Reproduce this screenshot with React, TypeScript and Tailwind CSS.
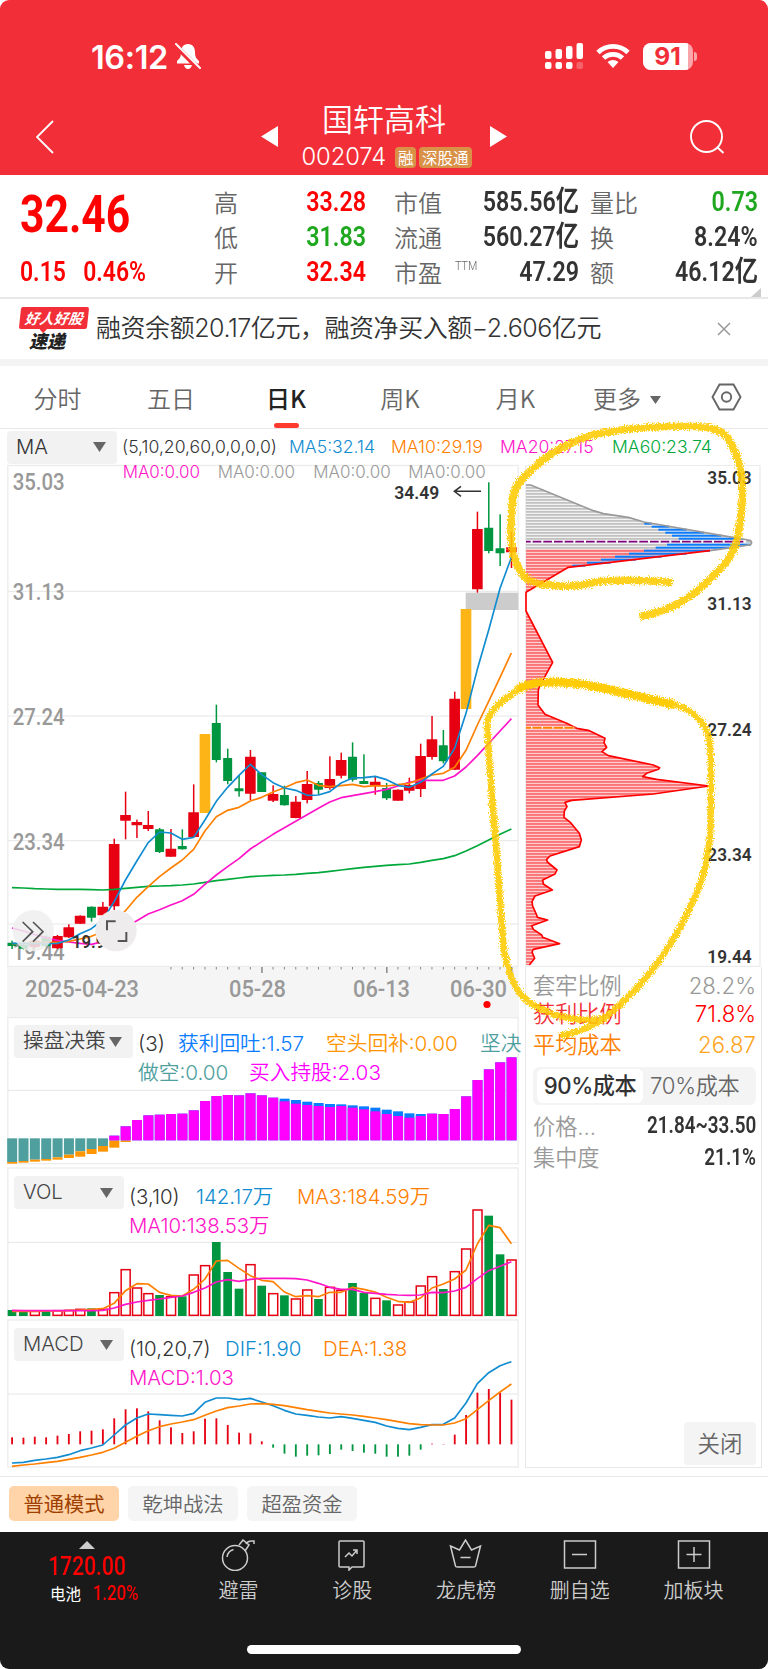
import type { ReactNode } from "react";

const SANS = "font-['Inter','Noto_Sans_CJK_SC',sans-serif]";
const CJK = "font-['Noto_Sans_CJK_SC',sans-serif]";
const DIN = "font-['Roboto','Noto_Sans_CJK_SC',sans-serif]";

// chart units: one third of a pixel
const STEP = 34.05;
const cx = (i: number) => 36 + STEP * i;
const line = (ys: number[]) => ys.map((y, i) => `${cx(i).toFixed(1)},${y}`).join(" ");

type Candle = [color: "r" | "g" | "y", high: number, top: number, bottom: number, low: number];

const candles: Candle[] = [
  ["g", 1442, 1448, 1458, 1467], ["g", 1450, 1455, 1466, 1468], ["r", 1438, 1442, 1460, 1464],
  ["g", 1426, 1430, 1458, 1460], ["r", 1425, 1428, 1465, 1467], ["r", 1393, 1402, 1432, 1434],
  ["r", 1366, 1367, 1391, 1392], ["g", 1339, 1340, 1373, 1385], ["r", 1326, 1340, 1366, 1367],
  ["r", 1136, 1152, 1339, 1350], ["r", 995, 1065, 1082, 1138], ["r", 1079, 1086, 1096, 1134],
  ["r", 1053, 1095, 1107, 1113], ["g", 1104, 1108, 1176, 1179], ["r", 1107, 1166, 1190, 1190],
  ["g", 1108, 1158, 1168, 1169], ["r", 973, 1057, 1131, 1133], ["y", 822, 822, 1059, 1059],
  ["g", 734, 789, 900, 907], ["g", 866, 894, 963, 973], ["g", 945, 985, 994, 1010],
  ["r", 870, 890, 1001, 1021], ["g", 937, 937, 996, 996], ["r", 976, 1002, 1022, 1026],
  ["g", 977, 1005, 1036, 1037], ["r", 1008, 1025, 1074, 1075], ["r", 933, 972, 1020, 1030],
  ["g", 963, 969, 989, 1004], ["r", 889, 957, 984, 989], ["r", 878, 900, 947, 955],
  ["g", 847, 890, 959, 965], ["g", 883, 963, 972, 972], ["r", 950, 965, 976, 1004],
  ["g", 969, 984, 1015, 1020], ["r", 988, 989, 1022, 1022], ["r", 953, 975, 992, 1000],
  ["r", 851, 888, 987, 1011], ["r", 768, 838, 891, 899], ["g", 810, 856, 904, 910],
  ["r", 695, 716, 929, 930], ["y", 447, 447, 747, 747], ["r", 155, 207, 388, 398],
  ["g", 67, 203, 273, 280], ["g", 163, 265, 280, 318], ["r", 215, 262, 277, 324],
];

const ma5 = [1450, 1451, 1451, 1451, 1450, 1440, 1421, 1406, 1380, 1325, 1260, 1203, 1148, 1116, 1119, 1138, 1132, 1080, 1024, 982, 946, 913, 944, 968, 984, 991, 1006, 1005, 995, 969, 954, 953, 949, 959, 976, 982, 967, 942, 919, 865, 760, 628, 510, 385, 292];
const ma10 = [1451, 1450, 1448, 1447, 1447, 1444, 1437, 1429, 1415, 1385, 1352, 1312, 1280, 1250, 1224, 1200, 1168, 1113, 1070, 1051, 1042, 1023, 1012, 996, 983, 968, 960, 976, 980, 977, 973, 980, 977, 978, 974, 970, 957, 945, 940, 922, 871, 795, 724, 652, 579];
const ma20 = [1404, 1413, 1424, 1433, 1441, 1446, 1450, 1453, 1445, 1425, 1400, 1382, 1362, 1349, 1335, 1322, 1303, 1273, 1245, 1220, 1196, 1167, 1145, 1123, 1103, 1084, 1064, 1045, 1026, 1013, 1007, 1001, 995, 988, 978, 967, 961, 961, 961, 948, 921, 887, 850, 813, 776];
const ma60 = [1283, 1284, 1286, 1287, 1288, 1288, 1288, 1289, 1290, 1288, 1285, 1282, 1279, 1278, 1277, 1275, 1272, 1267, 1262, 1258, 1254, 1250, 1248, 1246, 1245, 1243, 1240, 1238, 1234, 1230, 1226, 1222, 1219, 1216, 1214, 1212, 1207, 1201, 1196, 1187, 1173, 1157, 1140, 1123, 1107];

const COLORS = { r: "#e60012", g: "#009640", y: "#fdb417" };

function CandleChart() {
  return (
    <svg className={`${DIN} overflow-visible`} width="512" height="502" viewBox="21 15 1536 1506">
      <rect x="23.5" y="16.5" width="1531" height="1503" fill="none" stroke="#ececec" strokeWidth="4" />
      {[394, 768, 1142, 1392].map((y) => (
        <line key={y} x1="23" x2="1555" y1={y} y2={y} stroke="#e6e6e6" strokeWidth="3" />
      ))}
      {([["35.03", 90], ["31.13", 420], ["27.24", 795], ["23.34", 1169], ["19.44", 1501]] as const).map(([t, y]) => (
        <text key={t} x="38" y={y} fontSize="72" fill="#999" fontWeight="500" textLength="156" lengthAdjust="spacingAndGlyphs">{t}</text>
      ))}
      <g className={SANS} fontSize="51">
        {[368, 653, 940, 1225].map((x, i) => (
          <text key={x} x={x} y="54" fill={i === 0 ? "#ff14c8" : "#999"} textLength="232" lengthAdjust="spacingAndGlyphs" fontWeight="350">MA0:0.00</text>
        ))}
      </g>
      <rect x="1397" y="398" width="158" height="52" fill="#ccc" />
      {candles.map(([c, high, top, bottom, low], i) => {
        const w = c === "g" ? 27 : 32;
        return (
          <g key={i} fill={COLORS[c]}>
            <rect x={cx(i) - 2} y={high} width="4.5" height={low - high} />
            <rect x={cx(i) - w / 2} y={top} width={w} height={bottom - top} rx="1" />
          </g>
        );
      })}
      <g fill="none" strokeWidth="5" strokeLinejoin="round">
        <polyline points={line(ma60)} stroke="#00a83c" />
        <polyline points={line(ma20)} stroke="#ff14c8" />
        <polyline points={line(ma10)} stroke="#ff8000" />
        <polyline points={line(ma5)} stroke="#108cd0" />
      </g>
      <text x="1183" y="117" fontSize="56" fill="#333" fontWeight="600" textLength="135" lengthAdjust="spacingAndGlyphs">34.49</text>
      <path d="M1443 94h-80m20-15-20 15 20 15" fill="none" stroke="#333" strokeWidth="4.5" />
      <text x="216" y="1463" fontSize="56" fill="#333" fontWeight="600" textLength="100" lengthAdjust="spacingAndGlyphs">19.9</text>
      <circle cx="100" cy="1412" r="62" fill="#eeeeee" fillOpacity=".85" />
      <circle cx="348" cy="1412" r="62" fill="#efecee" />
      <path d="M68 1386l30 29-30 30M99 1386l30 29-30 30" fill="none" stroke="#555" strokeWidth="5" />
      <path d="M321 1411v-27h26M379 1416v27h-26" fill="none" stroke="#555" strokeWidth="6" />
    </svg>
  );
}

function DateAxis() {
  return (
    <svg className={`${DIN} bg-[#f5f5f5]`} width="512" height="50" viewBox="7 967 512 50">
      {Array.from({ length: 31 }, (_, k) => k + 14).map((i) => {
        const major = i === 22 || i === 33 || i === 44;
        return <rect key={i} x={cx(i) / 3 - 0.5} y="967" width={major ? 1.5 : 1} height={major ? 6 : 2.5} fill="#888" />;
      })}
      <g fontSize="24" fill="#999" fontWeight="500">
        <text x="25" y="997" textLength="114" lengthAdjust="spacingAndGlyphs">2025-04-23</text>
        <text x="229" y="997" textLength="57" lengthAdjust="spacingAndGlyphs">05-28</text>
        <text x="353" y="997" textLength="57" lengthAdjust="spacingAndGlyphs">06-13</text>
        <text x="450" y="997" textLength="57" lengthAdjust="spacingAndGlyphs">06-30</text>
      </g>
      <circle cx="487" cy="1004.5" r="3.6" fill="#f00" />
    </svg>
  );
}

// [top of blue, top of magenta] for the bars from index 9 onwards
const holdBars: [number, number][] = [
  [527, 527], [499, 499], [480, 480], [466, 466], [464, 464], [462, 462], [461, 461], [451, 451], [423, 423],
  [408, 408], [405, 405], [406, 406], [400, 400], [406, 406], [413, 413], [416, 424], [420, 431], [425, 435],
  [429, 438], [432, 441], [433, 438], [436, 443], [439, 448], [443, 454], [449, 462], [454, 468], [460, 473],
  [462, 468], [461, 461], [462, 462], [447, 447], [409, 409], [360, 360], [328, 328], [307, 307], [292, 292],
];
const shortBars: [number, number][] = [
  [606, 611], [603, 608], [599, 605], [597, 602], [592, 599], [584, 594], [574, 590], [567, 582], [558, 575],
];

function DecisionChart() {
  return (
    <svg className="absolute left-0 top-0" width="512" height="148" viewBox="21 171 1536 444">
      <rect x="23.5" y="173" width="1531" height="438" fill="none" stroke="#ececec" strokeWidth="4" />
      <line x1="23" x2="1555" y1="391" y2="391" stroke="#e6e6e6" strokeWidth="3" />
      {shortBars.map(([a, b], i) => (
        <g key={i}>
          <rect x={cx(i) - 14.5} y="535" width="30" height={a - 535} fill="#4f9f9f" />
          <rect x={cx(i) - 14.5} y={a} width="30" height={b - a} fill="#ff9500" />
        </g>
      ))}
      <rect x={cx(9) - 14.5} y="541" width="30" height="22" fill="#ff9500" />
      <rect x={cx(10) - 14.5} y="541" width="30" height="5" fill="#ff9500" />
      {holdBars.map(([b, m], k) => (
        <g key={k}>
          <rect x={cx(k + 9) - 14.5} y={b} width="30" height={541 - b} fill="#0a7cff" />
          <rect x={cx(k + 9) - 14.5} y={m} width="30" height={541 - m} fill="#f0f" />
        </g>
      ))}
    </svg>
  );
}

const volume = [420, 422, 423, 421, 421, 420, 417, 415, 417, 367, 298, 353, 370, 375, 379, 379, 314, 286, 216, 306, 356, 283, 347, 370, 376, 386, 359, 387, 351, 360, 339, 369, 384, 391, 404, 395, 347, 319, 357, 304, 236, 119, 137, 253, 269];
const volumeDown = new Set([0, 1, 3, 7, 13, 15, 18, 19, 20, 22, 24, 27, 30, 31, 33, 38, 42, 43]);
const volMa3 = [424, 424, 424, 423, 423, 422, 420, 418, 416, 400, 362, 341, 342, 367, 376, 378, 358, 327, 273, 271, 295, 317, 331, 335, 366, 380, 377, 380, 367, 367, 352, 358, 366, 382, 394, 397, 384, 354, 342, 327, 300, 222, 166, 173, 221];
const volMa10 = [421, 422, 422, 422, 422, 422, 422, 422, 421, 414, 403, 396, 391, 387, 382, 378, 367, 354, 336, 329, 334, 328, 325, 325, 325, 326, 330, 340, 352, 358, 358, 367, 370, 373, 375, 376, 375, 367, 368, 363, 352, 326, 302, 289, 275];

function VolumeChart() {
  return (
    <svg className="absolute left-0 top-0" width="512" height="150" viewBox="21 -9 1536 450">
      <rect x="23.5" y="-6" width="1531" height="444" fill="none" stroke="#ececec" strokeWidth="4" />
      <line x1="23" x2="1555" y1="217" y2="217" stroke="#e6e6e6" strokeWidth="3" />
      {volume.map((y, i) =>
        volumeDown.has(i) ? (
          <rect key={i} x={cx(i) - 13} y={y} width="26" height={438 - y} fill="#009640" />
        ) : (
          <rect key={i} x={cx(i) - 13} y={y + 1} width="27" height={435 - y} fill="none" stroke="#e60012" strokeWidth="4.5" />
        ),
      )}
      <g fill="none" strokeWidth="5" strokeLinejoin="round">
        <polyline points={line(volMa3)} stroke="#ff8000" />
        <polyline points={line(volMa10)} stroke="#ff14c8" />
      </g>
    </svg>
  );
}

const macdBars = [803, 804, 801, 803, 798, 793, 785, 783, 779, 746, 719, 716, 725, 752, 773, 790, 785, 747, 746, 766, 789, 791, 815, 834, 852, 861, 858, 857, 853, 840, 844, 849, 852, 861, 861, 858, 840, 822, 823, 795, 736, 669, 658, 669, 690];
const dif = [880, 878, 872, 868, 863, 855, 843, 835, 826, 796, 766, 745, 733, 735, 737, 739, 731, 698, 685, 685, 690, 686, 697, 708, 722, 733, 737, 742, 745, 741, 746, 752, 758, 769, 776, 780, 773, 765, 764, 745, 700, 642, 609, 588, 576];
const dea = [890, 886, 883, 879, 875, 869, 863, 856, 848, 836, 818, 800, 783, 771, 763, 757, 750, 737, 724, 714, 709, 703, 702, 704, 708, 714, 720, 725, 730, 733, 736, 740, 745, 750, 756, 762, 765, 766, 766, 760, 747, 720, 693, 667, 643];

function MacdChart() {
  return (
    <svg className="absolute left-0 top-0" width="512" height="149" viewBox="21 448 1536 447">
      <rect x="23.5" y="451" width="1531" height="441" fill="none" stroke="#ececec" strokeWidth="4" />
      <line x1="23" x2="1555" y1="673" y2="673" stroke="#e6e6e6" strokeWidth="3" />
      {macdBars.map((y, i) => (
        <rect key={i} x={cx(i) - 2.5} y={Math.min(y, 824)} width="5.5" height={Math.abs(y - 824)} fill={y > 824 ? "#009640" : "#e60012"} />
      ))}
      <g fill="none" strokeWidth="5" strokeLinejoin="round">
        <polyline points={line(dif)} stroke="#108cd0" />
        <polyline points={line(dea)} stroke="#ff8000" />
      </g>
    </svg>
  );
}

const trappedEdge = "62,195 250,272 280,281 355,292 402,306 690,356 722,362 725,368 722,374 690,379 600,392";
const profitEdge =
  "600,392 175,442 48,517 48,573 128,727 88,800 85,810 84,855 105,883 170,910 200,925 235,931 285,955 282,968 290,982 276,995 295,1007 430,1035 449,1043 445,1048 410,1060 398,1070 440,1078 597,1098 430,1122 185,1141 165,1147 171,1160 163,1173 162,1192 182,1208 208,1240 214,1260 208,1280 120,1308 110,1318 112,1326 141,1350 135,1362 98,1380 100,1392 127,1410 75,1428 66,1445 68,1458 80,1485 82,1492 113,1500 65,1517 70,1528 95,1545 98,1552 149,1571 70,1588 66,1596 74,1615 58,1635";
// [y, x where the blue part begins, x where it ends]
const recentRows = [
  [310, 403, 425], [319, 425, 478], [328, 445, 530], [337, 466, 582], [346, 486, 634], [355, 506, 685], [373, 471, 722],
  [382, 437, 670], [391, 402, 600], [400, 357, 530], [409, 315, 455], [418, 273, 378], [427, 231, 302], [436, 187, 226],
];

function ChipChart() {
  return (
    <svg className={DIN} width="237" height="502" viewBox="45 135 711 1506">
      <defs>
        <pattern id="trapped" width="9" height="9" y="193" patternUnits="userSpaceOnUse">
          <rect width="9" height="6.5" fill="#e2e2e2" />
          <rect width="9" height="3" fill="#a4a4a4" />
        </pattern>
        <pattern id="profit" width="9" height="9" y="193" patternUnits="userSpaceOnUse">
          <rect width="9" height="7" fill="#ffb4b4" />
          <rect width="9" height="3.6" fill="#f63c40" />
        </pattern>
        <clipPath id="profitClip">
          <rect x="47" y="387" width="680" height="1260" />
        </clipPath>
        <clipPath id="trappedClip">
          <rect x="47" y="190" width="680" height="197" />
        </clipPath>
      </defs>
      <path d="M47 1641V136h703v1505M47 1639h703" fill="none" stroke="#ececec" strokeWidth="4" />
      <polygon points={`48,195 ${trappedEdge} ${profitEdge} 48,1635`} fill="url(#trapped)" clipPath="url(#trappedClip)" />
      <polygon points={`48,195 ${trappedEdge} ${profitEdge} 48,1635`} fill="url(#profit)" clipPath="url(#profitClip)" />
      {recentRows.map(([y, a, b]) => (
        <rect key={y} x={a} y={y - 2} width={b - a} height="6" fill="#0a7cff" />
      ))}
      <polyline points={`48,195 ${trappedEdge}`} fill="none" stroke="#999" strokeWidth="5" strokeLinejoin="round" />
      <polyline points={profitEdge} fill="none" stroke="#f00" strokeWidth="5" strokeLinejoin="round" />
      <rect x="48" y="361" width="660" height="7" fill="#fff" />
      <line x1="48" x2="700" y1="365" y2="365" stroke="#800080" strokeWidth="5" strokeDasharray="26 6" strokeDashoffset="12" />
      <rect x="48" y="920" width="145" height="6" fill="#fff" />
      <line x1="48" x2="196" y1="923" y2="923" stroke="#ff8000" strokeWidth="6" strokeDasharray="28 4" strokeDashoffset="13" />
      <g fontSize="56" fill="#333" fontWeight="600">
        {([["35.03", 193], ["31.13", 571], ["27.24", 947], ["23.34", 1324], ["19.44", 1629]] as const).map(([t, y]) => (
          <text key={t} x="592" y={y} textLength="133" lengthAdjust="spacingAndGlyphs">{t}</text>
        ))}
      </g>
    </svg>
  );
}

// crayon circles laid over both charts
function Scribbles() {
  return (
    <svg className="absolute left-0 top-0 pointer-events-none" width="768" height="1669" viewBox="0 0 768 1669">
      <defs>
        <filter id="crayon" x="-5%" y="-5%" width="110%" height="110%">
          <feTurbulence type="fractalNoise" baseFrequency="0.8" numOctaves="3" seed="4" result="n" />
          <feDisplacementMap in="SourceGraphic" in2="n" scale="7" xChannelSelector="R" yChannelSelector="G" />
          <feGaussianBlur stdDeviation="0.4" />
        </filter>
      </defs>
      <g filter="url(#crayon)" transform="translate(-.5 -.5)" fill="none" stroke="#ffcb05" strokeOpacity=".88" strokeLinejoin="round">
        <path
          strokeWidth="7.5"
          d="M673 583C648 581 624 580 606 581.5C590 583 574 589 556 586C542 585 530 585 521 572C511 556 510 538 512.5 510C512 498 515 487 524 478C540 462 560 445 592 436C622 428 680 425 708 428C728 430 734 446 739 462C745 482 743 500 741 520C738 545 734 558 716 574C690 602 668 612 640 617"
        />
        <path
          strokeWidth="6.5"
          d="M607 1019C590 1022 560 1020 546 1011C520 1002 512 985 505 955C500 910 500 880 496 840C492 795 489 760 488 724C488 712 502 702 512 695C528 680 550 682 570 683C612 688 640 697 678 706C700 714 710 728 711 750C712 780 711 800 711 830C709 860 704 880 692 905C676 940 656 970 630 996C612 1014 594 1031 561 1036"
        />
        <path strokeWidth="9" d="M518 690C530 682 550 682 570 683C600 686 640 698 674 705" />
      </g>
    </svg>
  );
}

function Select({ children, width, cjk }: { children: ReactNode; width: string; cjk?: boolean }) {
  return (
    <div className={`${width} shrink-0 h-[33px] rounded bg-[#f2f2f2] text-[#444] flex items-center justify-between pl-[9px] pr-[11px] ${cjk ? "text-[20.7px]" : "text-[20.3px]"}`}>
      <span className="whitespace-nowrap -mt-px">{children}</span>
      <svg className="shrink-0" width="13" height="10" viewBox="0 0 13 10"><path d="M0 0h13L6.5 10z" fill="#666" /></svg>
    </div>
  );
}

function Stat({ label, value, color = "text-[#333]", sup }: { label: string; value: string; color?: string; sup?: string }) {
  return (
    <div className="flex items-center justify-between h-[35px]">
      <span className={`${CJK} -mt-[3px] text-[24px] leading-[35px] font-[350] text-[#666] flex whitespace-nowrap`}>
        {label}
        {sup && <span className="font-['Roboto'] text-[12.5px] leading-[16px] ml-[13px] mt-[4px] scale-x-[.86] origin-left">{sup}</span>}
      </span>
      <span className={`${DIN} ${color} -mt-px text-[28px] font-[600] whitespace-nowrap origin-right scale-x-[.83] -ml-8`}>{value}</span>
    </div>
  );
}

const tabs = ["分时", "五日", "日K", "周K", "月K"];
const tabWidth = ["w-[115px]", "w-[112px]", "w-[118px]", "w-[110px]", "w-[121px]"];

const actions: { label: string; icon: ReactNode }[] = [
  { label: "避雷", icon: <><circle cx="14" cy="19" r="12.5" /><path d="M6 18c.5-4 3-6.500 6.500-7.500M18 6l4-5 6 5-4 6M25 5c2-4 5-3 8-3v3" /></> },
  { label: "诊股", icon: <><path d="M5 2h23q1 0 1 1v24q0 1-1 1H17l-3 3v-3H5q-1 0-1-1V3q0-1 1-1zM10 18l4-4 3 3 5-6M18 11h4v4" /></> },
  { label: "龙虎榜", icon: <><path d="M1.500 7l9 4L16.500 1l6 10 9-4-5 20q0 1-2 1h-16q-2 0-2-1zM11.500 18.500h10" /></> },
  { label: "删自选", icon: <><path d="M1.500 2h31v27h-31zM9 15.500h15" /></> },
  { label: "加板块", icon: <><path d="M1.500 2h31v27h-31zM9.500 15.500h15M17 8v15" /></> },
];

export default function App() {
  return (
    <div className={`${SANS} relative w-[768px] h-[1669px] bg-white overflow-hidden rounded-[9px] text-[#333]`}>
      {/* Header */}
      <header className="h-[175px] bg-[#f22f38] text-white">
        <div className="h-[88px] pt-[40px] pl-[91px] pr-[71px] flex items-start">
          <span className="w-[84px] text-[32.5px] leading-[35px] font-semibold tracking-[-0.4px]">16:12</span>
          <svg width="26" height="27" viewBox="0 0 26 27" className="mt-[3px]">
            <path d="M13 1c5 0 7 4 7 8 0 6 2 7 4 9v2.5H2V18c2-2 4-3 4-9 0-4 2-8 7-8zM9 22h8q-1 4-4 4t-4-4z" fill="#fff" />
            <path d="M0 2l24 24" stroke="#f22f38" strokeWidth="5" />
            <path d="M1 1l24 24" stroke="#fff" strokeWidth="2" strokeLinecap="round" />
          </svg>
          <div className="ml-auto mt-[3px] flex items-start">
            <svg width="39" height="27" viewBox="0 0 39 27" fill="#fff">
              <rect x="0" y="8" width="6.5" height="8" rx="2" /><rect x="10.5" y="6" width="6.5" height="10" rx="2" />
              <rect x="21" y="3" width="6.5" height="13" rx="2" /><rect x="31.5" y="0" width="6.5" height="16" rx="2" />
              <rect x="0" y="19" width="6.5" height="7" rx="2" /><rect x="10.5" y="19" width="6.5" height="7" rx="2" />
              <rect x="21" y="19" width="6.5" height="7" rx="2" /><rect x="31.5" y="19" width="6.5" height="7" rx="2" opacity=".25" />
            </svg>
            <svg width="34" height="26" viewBox="0 0 34 26" className="ml-[12px]">
              <path d="M2 9.5a21.5 21.5 0 0 1 30 0M7.5 15a14 14 0 0 1 19 0" fill="none" stroke="#fff" strokeWidth="4.8" />
              <path d="M17 25l-5.5-6q5.5-4 11 0z" fill="#fff" />
            </svg>
            <div className="ml-[13px] h-[27px] flex items-center">
              <div className="relative w-[50px] h-[27px] rounded-[8px] bg-[#f9a5a9] overflow-hidden">
                <div className="w-[45px] h-full bg-white" />
                <span className="absolute inset-0 text-center text-[24.5px] leading-[27px] font-bold text-[#f22f38]">91</span>
              </div>
              <div className="ml-[1.5px] w-[3px] h-[9px] rounded-r-full bg-[#f9a5a9]" />
            </div>
          </div>
        </div>
        <div className="h-[87px] flex items-start">
          <svg width="18" height="34" viewBox="0 0 18 34" className="ml-[36px] mt-[32px]"><path d="M17 1L1 17l16 16" fill="none" stroke="#fff" strokeWidth="1.8" /></svg>
          <svg width="17" height="21" viewBox="0 0 17 21" className="ml-[207px] mt-[38px]"><path d="M17 0v21L0 10.5z" fill="#fff" /></svg>
          <div className="w-[212px] pt-[11px] flex flex-col items-center">
            <div className={`${CJK} text-[31px] leading-[38px] font-[350]`}>国轩高科</div>
            <div className="mt-[7px] pl-[5px] flex items-center h-[26px]">
              <span className="text-[23.8px] w-[94px] font-[350] tracking-[-0.1px]">002074</span>
              <span className={`${CJK} h-[21px] px-[2.5px] rounded-sm bg-[#d99148] text-[15.5px] leading-[20px]`}>融</span>
              <span className={`${CJK} ml-[3px] h-[21px] px-[3px] rounded-sm bg-[#d99148] text-[15.5px] leading-[20px]`}>深股通</span>
            </div>
          </div>
          <svg width="17" height="21" viewBox="0 0 17 21" className="mt-[38px]"><path d="M0 0v21l17-10.5z" fill="#fff" /></svg>
          <svg width="36" height="36" viewBox="0 0 36 36" className="ml-[183px] mt-[32px]"><circle cx="16.5" cy="16.5" r="15.5" fill="none" stroke="#fff" strokeWidth="1.9" /><path d="M27 27l6.5 6" stroke="#fff" strokeWidth="1.9" /></svg>
        </div>
      </header>

      {/* Quote */}
      <section className="relative h-[124px] flex border-b-2 border-[#e8e8e8] pt-[10px]">
        <div className={`${DIN} w-[214px] pl-[20px] text-[#f00] whitespace-nowrap`}>
          <div className="h-[70px] pt-[2px] text-[52px] leading-[56px] font-bold origin-left scale-x-[.82]">32.46</div>
          <div className="h-[35px] flex items-center text-[28px] leading-[33px] font-[600] origin-left scale-x-[.82] -mt-px">
            <span className="w-[77px]">0.15</span>
            <span>0.46%</span>
          </div>
        </div>
        <div className="w-[152px]">
          <Stat label="高" value="33.28" color="text-[#f00]" />
          <Stat label="低" value="31.83" color="text-[#1fa81f]" />
          <Stat label="开" value="32.34" color="text-[#f00]" />
        </div>
        <div className="ml-[28px] w-[185px]">
          <Stat label="市值" value="585.56亿" />
          <Stat label="流通" value="560.27亿" />
          <Stat label="市盈" value="47.29" sup="TTM" />
        </div>
        <div className="ml-[11px] w-[168px]">
          <Stat label="量比" value="0.73" color="text-[#1fa81f]" />
          <Stat label="换" value="8.24%" />
          <Stat label="额" value="46.12亿" />
        </div>
        <svg className="absolute right-[7px] bottom-0" width="10" height="9" viewBox="0 0 10 9"><path d="M10 0v9H0z" fill="#ccc" /></svg>
      </section>

      {/* News */}
      <section className="h-[60px] flex items-center pl-[20px] pr-[37px]">
        <div className={`${CJK} w-[68px] h-[44px] flex flex-col italic font-bold`}>
          <div className="relative h-[22px] -skew-x-6 rounded-[2px] bg-[#f22f38] text-white text-[14.5px] leading-[22px] text-center">
            好人好股
            <i className="absolute left-[22px] top-[20px] w-[5px] h-[5px] rotate-45 bg-[#f22f38]" />
          </div>
          <div className="pl-[9px] mt-px text-[18px] leading-[21px] font-black text-[#222]">速递</div>
        </div>
        <span className="ml-[8px] text-[25px] font-[350] tracking-[-0.45px] whitespace-nowrap">融资余额20.17亿元，融资净买入额−2.606亿元</span>
        <svg className="ml-auto" width="14" height="14" viewBox="0 0 14 14"><path d="M1 1l12 12M13 1L1 13" stroke="#999" strokeWidth="1.5" /></svg>
      </section>
      <div className="h-[7px] bg-[#f4f4f4]" />

      {/* Period tabs */}
      <nav className={`${CJK} h-[63px] flex border-b border-[#e8e8e8] text-[24px] text-[#666]`}>
        {tabs.map((t, i) => (
          <div key={t} className={`${tabWidth[i]} h-full flex flex-col items-center justify-between pt-[13px] ${t === "日K" ? "font-medium text-[#222]" : "font-[350]"}`}>
            <span className="leading-[38px]">{t}</span>
            {t === "日K" && <i className="w-[25px] h-[5px] rounded-sm bg-[#ff3b30]" />}
          </div>
        ))}
        <div className="h-full pl-[17px] pt-[13px] flex font-[350]">
          <span className="leading-[38px]">更多</span>
          <svg className="ml-[9px] mt-[17px]" width="11" height="8" viewBox="0 0 11 8"><path d="M0 0h11L5.5 8z" fill="#666" /></svg>
        </div>
        <svg className="ml-[50px] mt-[17px]" width="31" height="28" viewBox="0 0 31 28" fill="none" stroke="#666" strokeWidth="1.9">
          <path d="M8.5 1.5h14L29.5 14l-7 12.5h-14L1.5 14z" /><circle cx="15.5" cy="14" r="4.7" />
        </svg>
      </nav>

      {/* Moving averages */}
      <div className="h-[36px] pl-[7px] flex items-center text-[17.6px] font-[350] whitespace-nowrap">
        <div className="w-[110px] h-[33px] mr-[5px] rounded bg-[#f2f2f2] flex items-center justify-between pl-[9px] pr-[11px] text-[20.3px] text-[#333]">
          MA
          <svg width="13" height="10" viewBox="0 0 13 10"><path d="M0 0h13L6.5 10z" fill="#666" /></svg>
        </div>
        <span className="w-[167px]">(5,10,20,60,0,0,0,0)</span>
        <span className="w-[102px] text-[#108cd0]">MA5:32.14</span>
        <span className="w-[109px] text-[#ff8000]">MA10:29.19</span>
        <span className="w-[112px] text-[#ff14c8]">MA20:27.15</span>
        <span className="text-[#00a83c]">MA60:23.74</span>
      </div>

      {/* Charts */}
      <main className="h-[1012px] flex pl-[7px] border-b border-[#e8e8e8]">
        <div className="w-[512px] flex flex-col">
          <CandleChart />
          <DateAxis />
          <div className="relative h-[150px]">
            <DecisionChart />
            <div className="relative flex pt-[8px] pl-[7px] text-[20.7px] font-[350] whitespace-nowrap">
              <Select width="w-[119px]" cjk>操盘决策</Select>
              <div className="pl-[5px] leading-[29px] pt-[4px]">
                <div className="flex">
                  <span className="w-[40px]">(3)</span>
                  <span className="w-[148px] text-[#0a7cff]">获利回吐:1.57</span>
                  <span className="w-[154px] text-[#ff9500]">空头回补:0.00</span>
                  <span className="text-[#4f9f9f]">坚决</span>
                </div>
                <div className="flex">
                  <span className="w-[111px] text-[#4f9f9f]">做空:0.00</span>
                  <span className="text-[#f0f]">买入持股:2.03</span>
                </div>
              </div>
            </div>
          </div>
          <div className="relative h-[152px]">
            <VolumeChart />
            <div className="relative flex pt-[9px] pl-[7px] text-[20.4px] font-[350] whitespace-nowrap">
              <Select width="w-[110px]">VOL</Select>
              <div className="pl-[5px] leading-[29px] pt-[6px]">
                <div className="flex">
                  <span className="w-[67px]">(3,10)</span>
                  <span className="w-[101px] text-[#108cd0]">142.17万</span>
                  <span className="text-[#ff8000]">MA3:184.59万</span>
                </div>
                <div className="text-[#ff14c8]">MA10:138.53万</div>
              </div>
            </div>
          </div>
          <div className="relative h-[149px]">
            <MacdChart />
            <div className="relative flex pt-[9px] pl-[7px] text-[20.4px] font-[350] whitespace-nowrap">
              <Select width="w-[110px]">MACD</Select>
              <div className="pl-[5px] leading-[29px] pt-[6px]">
                <div className="flex">
                  <span className="w-[96px]">(10,20,7)</span>
                  <span className="w-[98px] text-[#108cd0]">DIF:1.90</span>
                  <span className="text-[#ff8000]">DEA:1.38</span>
                </div>
                <div className="text-[#ff14c8]">MACD:1.03</div>
              </div>
            </div>
          </div>
        </div>

        <aside className="ml-[6px] w-[237px] h-[1003px] flex flex-col">
          <ChipChart />
          <div className="flex-1 border-x border-b border-[#e8e8e8] pl-[7px] pr-[5px] pt-[4px] pb-[2px] flex flex-col text-[22.2px] font-[350]">
            <div className="h-[29px] leading-[29px] flex justify-between text-[#999]"><span>套牢比例</span><span>28.2%</span></div>
            <div className="h-[29px] leading-[27px] flex justify-between text-[#f00]"><span className="text-[#f22f38]">获利比例</span><span>71.8%</span></div>
            <div className="h-[31px] leading-[31px] flex justify-between text-[#ffa51e]"><span className="text-[#ff8000]">平均成本</span><span>26.87</span></div>
            <div className="mt-[7px] h-[38px] rounded-md bg-[#f4f4f4] flex items-center pl-[4px] text-[#666]">
              <span className="w-[106px] h-[34px] leading-[34px] rounded-md bg-white text-center font-medium text-[#333] whitespace-nowrap tracking-[-0.4px]">90%成本</span>
              <span className="pl-[7px] whitespace-nowrap tracking-[-0.3px]">70%成本</span>
            </div>
            <div className="mt-[6px] h-[31px] flex items-center justify-between text-[#999]">
              <span>价格…</span>
              <span className={`${DIN} text-[23px] font-[600] text-[#333] origin-right scale-x-[.82]`}>21.84~33.50</span>
            </div>
            <div className="h-[32px] flex items-center justify-between text-[#999]">
              <span>集中度</span>
              <span className={`${DIN} text-[23px] font-[600] text-[#333] origin-right scale-x-[.82]`}>21.1%</span>
            </div>
            <button className="mt-auto self-end w-[72px] h-[43px] rounded bg-[#f4f4f4] text-[#666] text-[22.5px] font-[350]">关闭</button>
          </div>
        </aside>
      </main>

      {/* Modes */}
      <div className={`${CJK} h-[55px] pl-[9px] pt-[9px] flex gap-[9px] text-[20.3px] text-center leading-[34px]`}>
        <span className="w-[110px] h-[35px] rounded-[5px] bg-[#ffd4a8] text-[#a04000]">普通模式</span>
        <span className="w-[110px] h-[35px] rounded-[5px] bg-[#f5f5f5] text-[#666] font-[350]">乾坤战法</span>
        <span className="w-[110px] h-[35px] rounded-[5px] bg-[#f5f5f5] text-[#666] font-[350]">超盈资金</span>
      </div>

      {/* Bottom bar */}
      <footer className="h-[137px] bg-[#1a1a1a] text-[#ccc] flex flex-col">
        <div className="flex">
          <div className={`${DIN} w-[174px] pt-[9px] flex flex-col items-center text-[#f00]`}>
            <svg width="16" height="8" viewBox="0 0 16 8"><path d="M8 0l8 8H0z" fill="#ccc" /></svg>
            <div className="mt-[3px] h-[29px] leading-[29px] text-[25px] font-medium scale-x-[.84]">1720.00</div>
            <div className="h-[25px] leading-[25px] flex pl-[14px]">
              <span className={`${CJK} text-[15.5px] text-white`}>电池</span>
              <span className="ml-[12px] w-[45px] text-[21px] font-medium origin-left scale-x-[.8]">1.20%</span>
            </div>
          </div>
          <div className="flex pl-[7.5px]">
            {actions.map((a) => (
              <div key={a.label} className="w-[113.8px] pt-[7px] flex flex-col items-center">
                <svg width="34" height="32" viewBox="0 0 34 32" fill="none" stroke="#ccc" strokeWidth="1.5">{a.icon}</svg>
                <span className={`${CJK} mt-[2px] text-[20px] leading-[33px] font-[350]`}>{a.label}</span>
              </div>
            ))}
          </div>
        </div>
        <div className="mt-[39px] mx-auto w-[274px] h-[9px] rounded-full bg-white" />
      </footer>

      <Scribbles />
    </div>
  );
}
